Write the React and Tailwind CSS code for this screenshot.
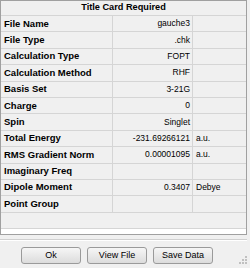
import React from "react";

const rows = [
  ["File Name", "gauche3", ""],
  ["File Type", ".chk", ""],
  ["Calculation Type", "FOPT", ""],
  ["Calculation Method", "RHF", ""],
  ["Basis Set", "3-21G", ""],
  ["Charge", "0", ""],
  ["Spin", "Singlet", ""],
  ["Total Energy", "-231.69266121", "a.u."],
  ["RMS Gradient Norm", "0.00001095", "a.u."],
  ["Imaginary Freq", "", ""],
  ["Dipole Moment", "0.3407", "Debye"],
  ["Point Group", "", ""],
];

function Btn({ children }) {
  return (
    <div className="w-[60px] h-[17px] rounded-[3px] border border-[#9a9a9a] bg-gradient-to-b from-[#f6f6f6] to-[#dcdcdc] flex items-center justify-center text-[9px] leading-none">
      {children}
    </div>
  );
}

export default function App() {
  return (
    <div className="w-[250px] h-[268px] bg-[#f0f0f0] relative font-['Liberation_Sans',sans-serif] text-[8.5px] text-black overflow-hidden">
      <div className="w-[247px] h-[235px] border border-[#a0a0a0] flex flex-col">
        <div className="h-[15px] border-b border-[#d5d5d5] flex items-center justify-center font-bold text-[9.2px] shrink-0">
          Title Card Required
        </div>
        {rows.map(([l, v, u]) => (
          <div
            key={l}
            className="h-[16.4px] shrink-0 border-b border-[#d5d5d5] grid grid-cols-[112px_80px_1fr] items-stretch"
          >
            <div className="border-r border-[#d5d5d5] pl-[3px] flex items-center font-bold text-[9.5px] whitespace-nowrap">
              {l}
            </div>
            <div className="border-r border-[#d5d5d5] pr-[2px] flex items-center justify-end whitespace-nowrap">
              {v}
            </div>
            <div className="pl-[3px] flex items-center whitespace-nowrap">{u}</div>
          </div>
        ))}
        <div className="flex-1" />
        <div className="h-[6px] bg-white border-t border-[#d5d5d5] shrink-0" />
      </div>
      <div className="mt-[4px] w-[247px] h-px bg-[#d0d0d0]" />
      <div className="h-px w-[247px] bg-white" />
      <div className="mt-[6px] pl-[21px] flex gap-[6px]">
        <Btn>Ok</Btn>
        <Btn>View File</Btn>
        <Btn>Save Data</Btn>
      </div>
      <svg className="absolute right-[3px] bottom-[4px]" width="8" height="8" viewBox="0 0 8 8">
        {[
          [6, 0],
          [6, 3],
          [3, 3],
          [6, 6],
          [3, 6],
          [0, 6],
        ].map(([x, y], i) => (
          <rect key={i} x={x} y={y} width="2" height="2" fill="#c0c0c0" />
        ))}
      </svg>
    </div>
  );
}
